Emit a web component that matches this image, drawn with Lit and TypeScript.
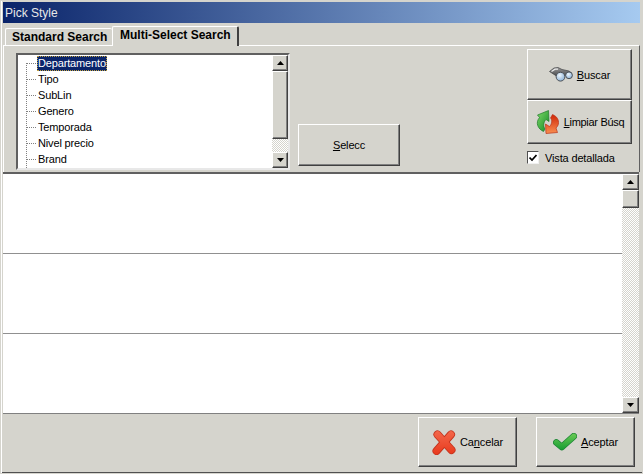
import { LitElement, html, css, svg } from "lit";
import { customElement } from "lit/decorators.js";

const arrowUp = svg`<svg width="7" height="4" viewBox="0 0 7 4"><path d="M3.5 0L7 4H0z" fill="#000"/></svg>`;
const arrowDown = svg`<svg width="7" height="4" viewBox="0 0 7 4"><path d="M0 0H7L3.5 4z" fill="#000"/></svg>`;

const binoculars = svg`<svg width="24" height="15" viewBox="0 0 24 15">
<defs><radialGradient id="lens" cx=".4" cy=".35" r=".75"><stop offset="0" stop-color="#eef6fc"/><stop offset="1" stop-color="#7ea8d2"/></radialGradient>
<linearGradient id="bod" x1="0" y1="0" x2="0" y2="1"><stop offset="0" stop-color="#9a9a9a"/><stop offset="1" stop-color="#3c3e42"/></linearGradient></defs>
<path d="M.5 4.5L5 1L9 .5L13 2.5L20 4L22.5 6L15 9L9 10z" fill="url(#bod)" stroke="#3f4144" stroke-width=".7"/>
<path d="M2.5 4.5L6 2.2H9" stroke="#ececec" stroke-width="1.2" fill="none"/>
<circle cx="11.5" cy="9.7" r="4.4" fill="url(#lens)" stroke="#4c5056"/>
<circle cx="20" cy="8.3" r="3.4" fill="url(#lens)" stroke="#4c5056"/>
</svg>`;

const refresh = svg`<svg width="23" height="24" viewBox="0 0 23 24">
<defs><linearGradient id="gr" x1="0" y1="0" x2="1" y2="1"><stop offset="0" stop-color="#7fd86a"/><stop offset="1" stop-color="#0f8a22"/></linearGradient>
<linearGradient id="rd" x1="0" y1="0" x2="0" y2="1"><stop offset="0" stop-color="#cf2608"/><stop offset="1" stop-color="#f98f50"/></linearGradient></defs>
<path d="M7.5 21.5C2 19 -1 13 3.5 7.5L1.5 5L12.5 .5L13 11.5L10 9.5C7.5 12 7 16 9 19Z" fill="url(#gr)" stroke="#1f7a2a" stroke-width=".7"/>
<path d="M16.5 4.5C23 7 24.5 14 20 18L21.5 22.5L10 23.5L9.5 14L13.5 16.5C16 14 16.5 10 14.5 8Z" fill="url(#rd)" stroke="#b8341a" stroke-width=".7"/>
</svg>`;

const cross = svg`<svg width="24" height="25" viewBox="0 0 24 25">
<defs><linearGradient id="xr" gradientUnits="userSpaceOnUse" x1="0" y1="0" x2="0" y2="25"><stop offset="0" stop-color="#f4694c"/><stop offset="1" stop-color="#e8391c"/></linearGradient></defs>
<g fill="none" stroke-linecap="round" stroke="#c4321c" stroke-width="8"><path d="M5.5 4.5L19.5 20"/><path d="M19 4.5L4.5 21"/></g>
<g fill="none" stroke-linecap="round" stroke="url(#xr)" stroke-width="6.4"><path d="M5.5 4.5L19.5 20"/><path d="M19 4.5L4.5 21"/></g>
</svg>`;

const check = svg`<svg width="24" height="18" viewBox="0 0 24 18">
<defs><linearGradient id="ck" gradientUnits="userSpaceOnUse" x1="0" y1="0" x2="0" y2="18"><stop offset="0" stop-color="#6ccb55"/><stop offset="1" stop-color="#129a30"/></linearGradient></defs>
<path d="M3.4 9.4L8.8 14L20.8 3.2" fill="none" stroke="#1b8334" stroke-width="6.6" stroke-linecap="round" stroke-linejoin="round"/>
<path d="M3.4 9.4L8.8 14L20.8 3.2" fill="none" stroke="url(#ck)" stroke-width="5.2" stroke-linecap="round" stroke-linejoin="round"/>
</svg>`;

@customElement("app-root")
export class AppRoot extends LitElement {
  static styles = css`
    :host {
      display: block;
      width: 643px;
      height: 474px;
      overflow: hidden;
      font-family: "Liberation Sans", Arial, sans-serif;
      font-size: 11px;
      letter-spacing: -0.15px;
      color: #000;
    }
    .window {
      box-sizing: border-box;
      width: 643px;
      height: 474px;
      background: #d5d4cd;
      border: 1px solid #d5d4cd;
      box-shadow: inset 1px 0 0 #fff, inset 0 -1px 0 #505050;
      padding: 1px 2px 2px 2px;
      display: flex;
      flex-direction: column;
    }
    .title {
      height: 21px;
      flex: none;
      background: linear-gradient(90deg, #0a246a, #a6caf0);
      color: #e8e8e8;
      font-size: 12px;
      letter-spacing: 0;
      line-height: 22px;
      padding-left: 2px;
    }
    .tabs {
      height: 22px;
      flex: none;
      display: flex;
      align-items: flex-end;
      padding-left: 2px;
    }
    .tab {
      box-sizing: border-box;
      font-weight: bold;
      font-size: 12px;
      letter-spacing: 0;
      white-space: nowrap;
      background: #d5d4cd;
      border-top: 1px solid #fff;
      border-left: 1px solid #fff;
      border-top-left-radius: 2px;
      border-top-right-radius: 2px;
    }
    .tab.off {
      height: 17px;
      width: 107px;
      padding: 1px 0 0 6px;
    }
    .tab.on {
      width: 127px;
      height: 20px;
      padding: 1px 0 0 7px;
      border-right: 2px solid #404040;
      position: relative;
      z-index: 1;
      margin-bottom: -1px;
    }
    .panel {
      box-sizing: border-box;
      height: 127px;
      flex: none;
      border-top: 1px solid #fff;
      border-right: 1px solid #606060;
      border-left: 1px solid #fff;
      display: flex;
      padding: 7px 0 0 12px;
    }
    .tree {
      box-sizing: border-box;
      width: 274px;
      height: 117px;
      flex: none;
      background: #fff;
      border: 2px solid;
      border-color: #606060 #e8e8e8 #e8e8e8 #606060;
      display: flex;
      overflow: hidden;
    }
    .tree-list {
      flex: 1;
      position: relative;
    }
    .row {
      display: flex;
      align-items: center;
      height: 16px;
      padding-left: 9px;
    }
    .stub {
      width: 9px;
      margin-right: 1px;
      border-top: 1px dotted #808080;
      flex: none;
    }
    .label {
      padding: 0 1px;
      height: 15px;
      line-height: 15px;
    }
    .row.sel .label {
      background: #0a246a;
      color: #fff;
      outline: 1px dotted #c0a040;
      outline-offset: -1px;
    }
    .spine {
      position: absolute;
      left: 8px;
      top: 8px;
      bottom: 0;
      border-left: 1px dotted #808080;
    }
    .sbar {
      width: 16px;
      flex: none;
      display: flex;
      flex-direction: column;
      background-color: #ecebe8;
      background-image: repeating-conic-gradient(#d5d4cd 0 25%, #fff 0 50%);
      background-size: 2px 2px;
    }
    .sb-btn {
      box-sizing: border-box;
      flex: none;
      background: #d5d4cd;
      border: 1px solid;
      border-color: #fff #404040 #404040 #fff;
      box-shadow: inset -1px -1px 0 #808080;
      display: flex;
      align-items: center;
      justify-content: center;
      height: 16px;
    }
    .sb-track { flex: 1; min-height: 0; }
    .tree .thumb { height: 68px; }
    .grid .thumb { height: 18px; }
    .btn {
      box-sizing: border-box;
      background: #d5d4cd;
      border: 1px solid;
      border-color: #fff #404040 #404040 #fff;
      box-shadow: inset -1px -1px 0 #808080;
      display: flex;
      align-items: center;
      justify-content: center;
      white-space: nowrap;
      flex: none;
    }
    u { text-decoration: underline; text-underline-offset: 1px; }
    .selecc {
      width: 102px;
      height: 42px;
      margin: 71px 0 0 8px;
    }
    .side {
      margin-left: 127px;
      margin-top: -4px;
      width: 105px;
      flex: none;
    }
    .buscar { width: 105px; height: 51px; gap: 4px; }
    .limpiar { width: 105px; height: 44px; gap: 5px; letter-spacing: -0.3px; padding-left: 1px; }
    .chk {
      display: flex;
      align-items: center;
      gap: 6px;
      margin-top: 7px;
      height: 13px;
    }
    .box {
      box-sizing: border-box;
      width: 12px;
      height: 13px;
      background: #fff;
      border: 1px solid;
      border-color: #505050 #f0f0f0 #f0f0f0 #505050;
      display: flex;
      align-items: center;
      justify-content: center;
    }
    .grid {
      flex: none;
      height: 242px;
      box-sizing: border-box;
      display: flex;
      background: #fff;
      border-top: 2px solid #606060;
      border-bottom: 1px solid #808080;
      margin-right: 1px;
    }
    .rows {
      flex: 1;
      display: flex;
      flex-direction: column;
    }
    .grow {
      box-sizing: border-box;
      height: 80px;
      flex: none;
      border-bottom: 1px solid #909090;
    }
    .grow:last-child { border-bottom: none; height: 79px; }
    .grid .sbar { width: 17px; }
    .footer {
      flex: 1;
      display: flex;
      justify-content: flex-end;
      gap: 19px;
      padding: 3px 5px 0 0;
    }
    .fbtn { width: 99px; height: 50px; gap: 4px; }
  `;

  render() {
    const items = ["Departamento", "Tipo", "SubLin", "Genero", "Temporada", "Nivel precio", "Brand"];
    return html`
      <div class="window">
        <div class="title">Pick Style</div>
        <div class="tabs">
          <div class="tab off">Standard Search</div>
          <div class="tab on">Multi-Select Search</div>
        </div>
        <div class="panel">
          <div class="tree">
            <div class="tree-list">
              <div class="spine"></div>
              ${items.map(
                (t, i) => html`<div class="row ${i === 0 ? "sel" : ""}">
                  <span class="stub"></span><span class="label">${t}</span>
                </div>`
              )}
            </div>
            <div class="sbar">
              <div class="sb-btn">${arrowUp}</div>
              <div class="sb-btn thumb"></div>
              <div class="sb-track"></div>
              <div class="sb-btn">${arrowDown}</div>
            </div>
          </div>
          <div class="btn selecc"><span><u>S</u>elecc</span></div>
          <div class="side">
            <div class="btn buscar">${binoculars}<span><u>B</u>uscar</span></div>
            <div class="btn limpiar">${refresh}<span><u>L</u>impiar Búsq</span></div>
            <div class="chk">
              <span class="box"><svg width="8" height="8" viewBox="0 0 8 8"><path d="M.5 3.5L3 6L7.5 1" fill="none" stroke="#000" stroke-width="1.7"/></svg></span>
              <span>Vista detallada</span>
            </div>
          </div>
        </div>
        <div class="grid">
          <div class="rows">
            <div class="grow"></div>
            <div class="grow"></div>
            <div class="grow"></div>
          </div>
          <div class="sbar">
            <div class="sb-btn">${arrowUp}</div>
            <div class="sb-btn thumb"></div>
            <div class="sb-track"></div>
            <div class="sb-btn">${arrowDown}</div>
          </div>
        </div>
        <div class="footer">
          <div class="btn fbtn">${cross}<span>Ca<u>n</u>celar</span></div>
          <div class="btn fbtn">${check}<span><u>A</u>ceptar</span></div>
        </div>
      </div>
    `;
  }
}
